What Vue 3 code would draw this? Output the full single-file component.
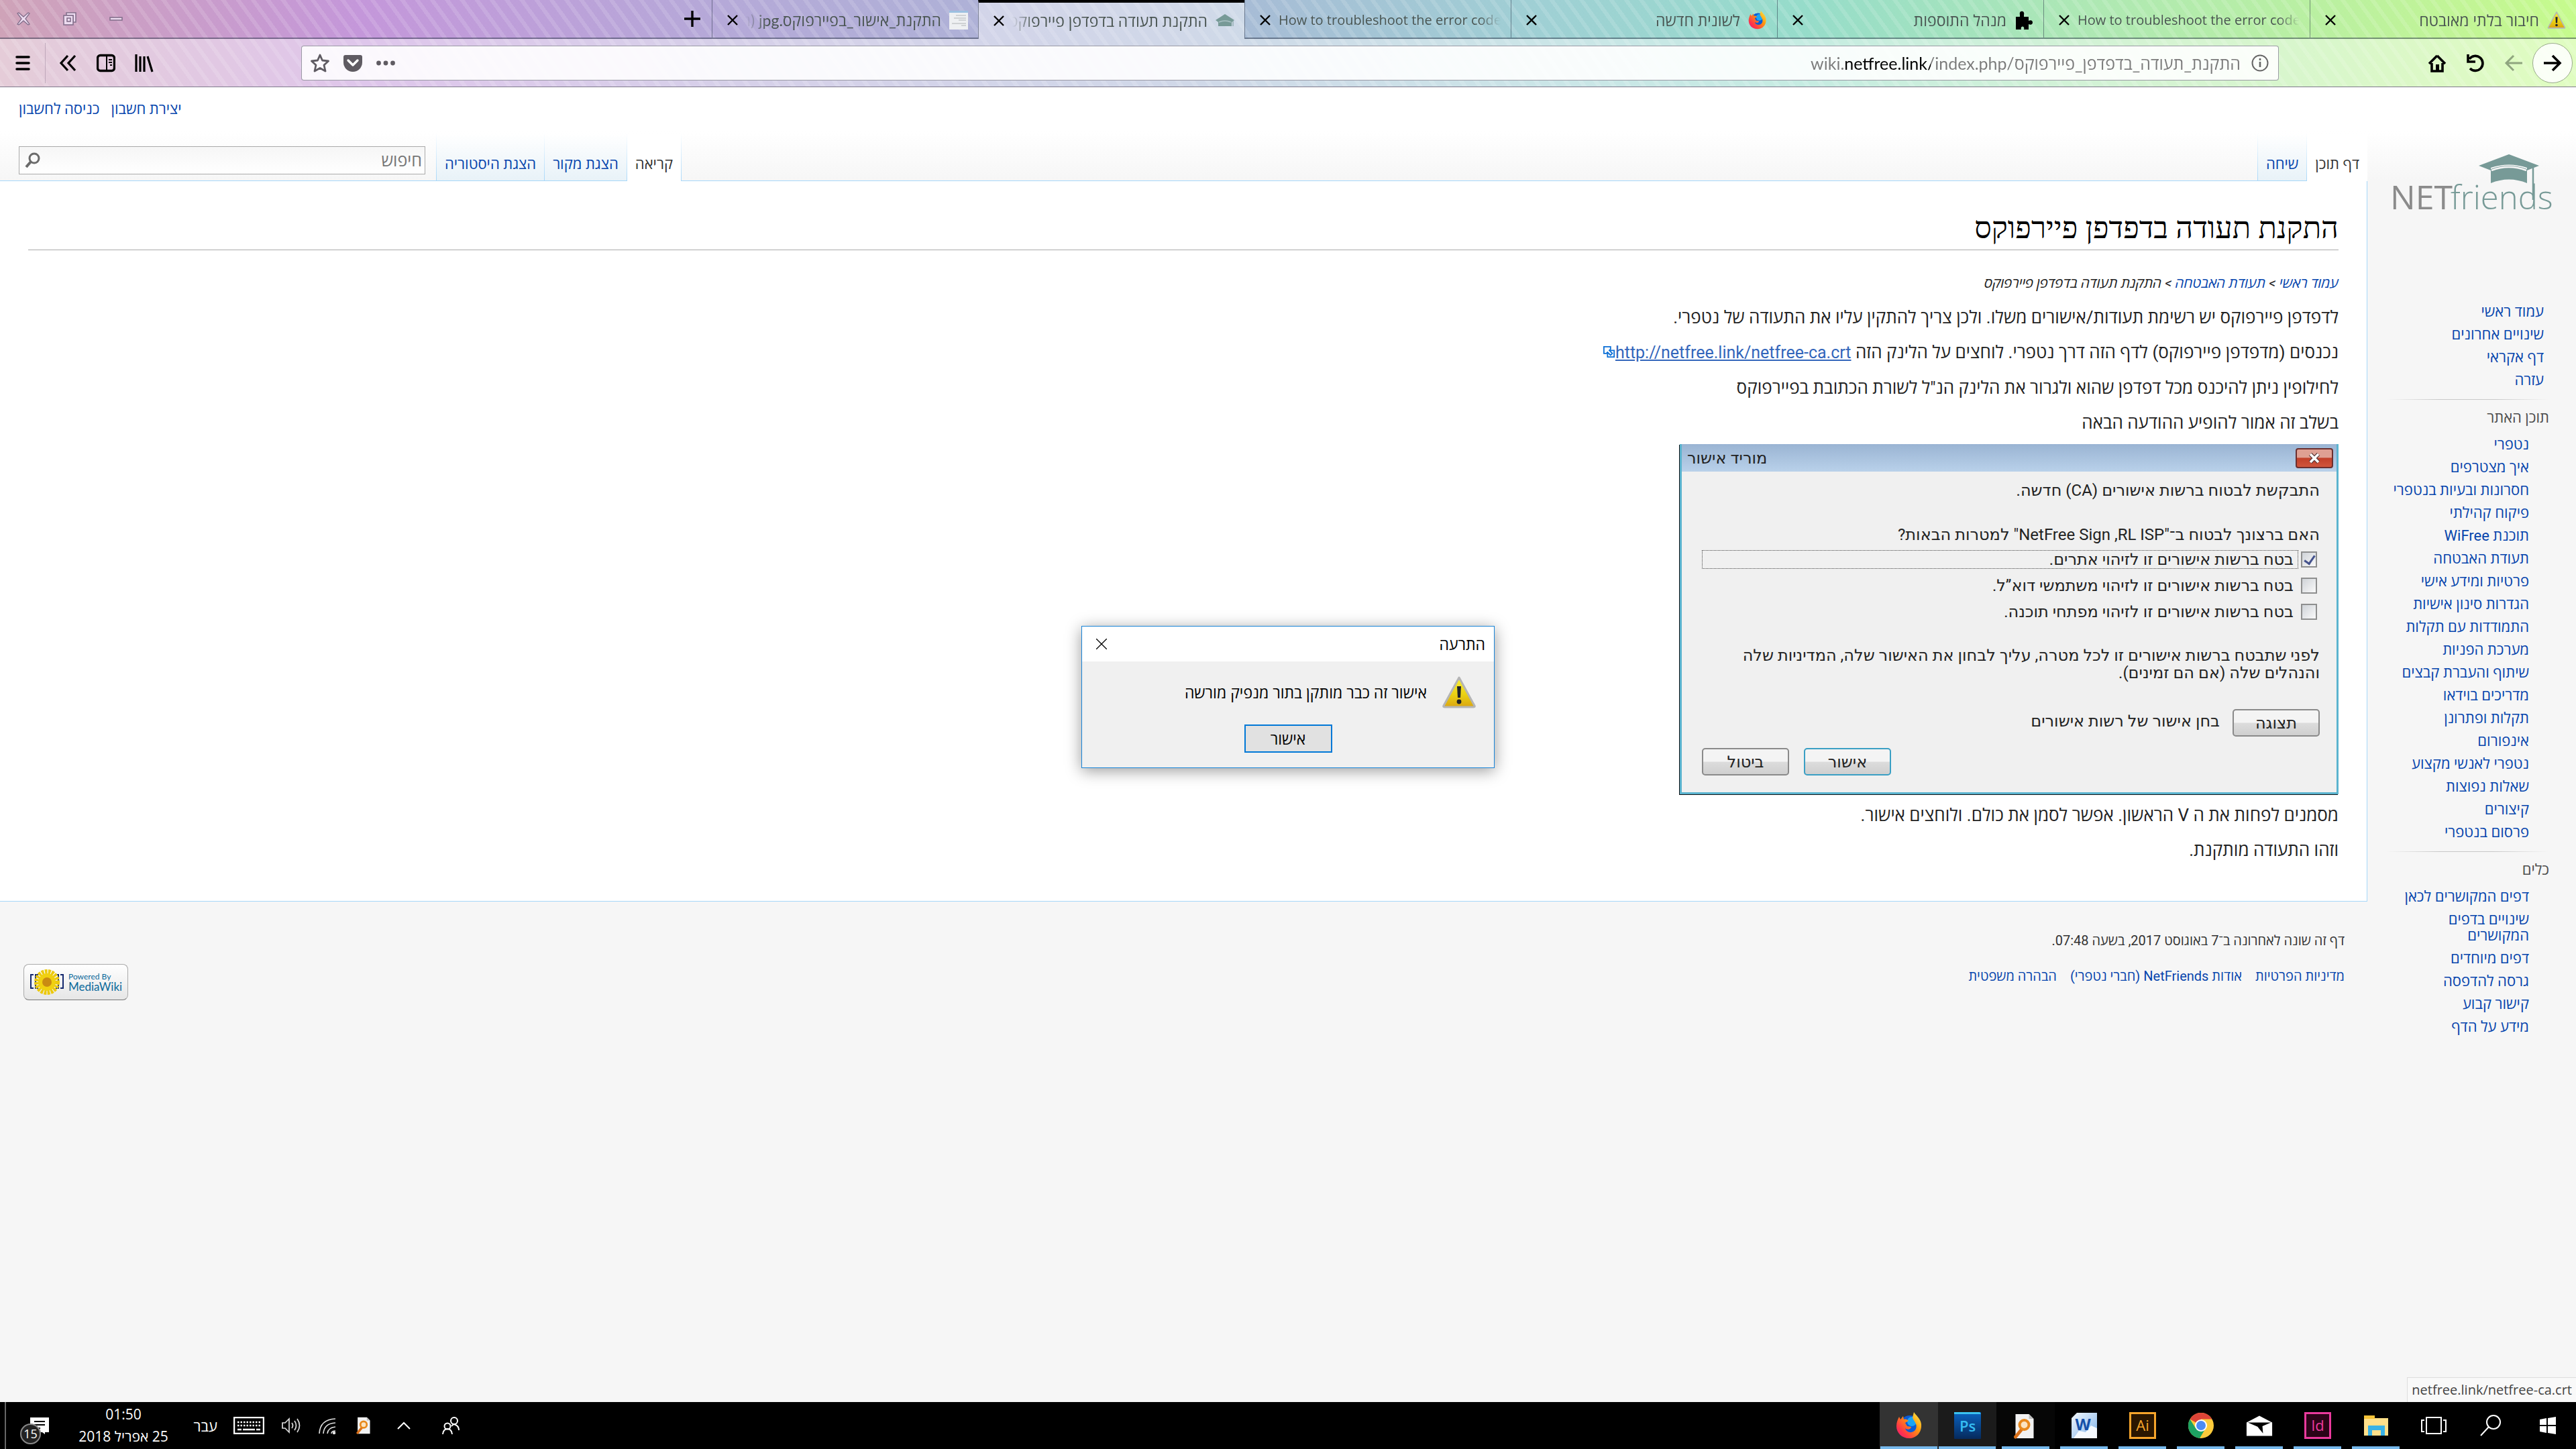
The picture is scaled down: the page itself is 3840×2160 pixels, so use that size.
<script setup>
import { ref } from 'vue';

const tabs = ref([
  { id: 0, title: 'חיבור בלתי מאובטח', icon: 'warn' },
  { id: 1, title: 'How to troubleshoot the error code', ltr: true },
  { id: 2, title: 'מנהל התוספות', icon: 'puzzle' },
  { id: 3, title: 'לשונית חדשה', icon: 'firefox' },
  { id: 4, title: 'How to troubleshoot the error code', ltr: true },
  { id: 5, title: 'התקנת תעודה בדפדפן פיירפוקס', icon: 'capicon' },
  { id: 6, title: 'התקנת_אישור_בפיירפוקס.jpg (ת', icon: 'thumb' }
]);
const activeTab = ref(5);
const url = ref('wiki.netfree.link/index.php/התקנת_תעודה_בדפדפן_פיירפוקס');
const search = ref('');
const showAlert = ref(true);

const mainLinks = ['עמוד ראשי', 'שינויים אחרונים', 'דף אקראי', 'עזרה'];
const siteLinks = [
  'נטפרי',
  'איך מצטרפים',
  'חסרונות ובעיות בנטפרי',
  'פיקוח קהילתי',
  'תוכנת WiFree',
  'תעודת האבטחה',
  'פרטיות ומידע אישי',
  'הגדרות סינון אישיות',
  'התמודדות עם תקלות',
  'מערכת הפניות',
  'שיתוף והעברת קבצים',
  'מדריכים בוידאו',
  'תקלות ופתרונן',
  'אינפורום',
  'נטפרי לאנשי מקצוע',
  'שאלות נפוצות',
  'קיצורים',
  'פרסום בנטפרי'
];
const toolLinks = [
  'דפים המקושרים לכאן',
  'שינויים בדפים המקושרים',
  'דפים מיוחדים',
  'גרסה להדפסה',
  'קישור קבוע',
  'מידע על הדף'
];
const footLinks = ['מדיניות הפרטיות', 'אודות NetFriends (חברי נטפרי)', 'הבהרה משפטית'];

const trust = ref([
  { id: 'web', label: 'בטח ברשות אישורים זו לזיהוי אתרים.', on: true },
  { id: 'mail', label: 'בטח ברשות אישורים זו לזיהוי משתמשי דוא”ל.', on: false },
  { id: 'code', label: 'בטח ברשות אישורים זו לזיהוי מפתחי תוכנה.', on: false }
]);

function closeTab(id) {
  tabs.value = tabs.value.filter((t) => t.id !== id);
}
</script>

<template>
  <div class="screen" dir="rtl">
    <svg class="defs" aria-hidden="true">
      <defs>
        <linearGradient id="gWarn" x1="0" y1="0" x2="0" y2="1">
          <stop offset="0" stop-color="#fbf13a" />
          <stop offset="0.6" stop-color="#e9cf12" />
          <stop offset="1" stop-color="#dba511" />
        </linearGradient>
        <linearGradient id="gFox" x1="1" y1="0" x2="0" y2="1">
          <stop offset="0" stop-color="#fff44f" />
          <stop offset="0.4" stop-color="#ff980e" />
          <stop offset="0.75" stop-color="#ff3647" />
          <stop offset="1" stop-color="#e31587" />
        </linearGradient>
        <linearGradient id="gPs" x1="0" y1="0" x2="0" y2="1">
          <stop offset="0" stop-color="#0a63c0" />
          <stop offset="1" stop-color="#062a5c" />
        </linearGradient>
        <linearGradient id="gWord" x1="0" y1="0" x2="1" y2="1">
          <stop offset="0" stop-color="#f4f9ff" />
          <stop offset="1" stop-color="#7fb2e8" />
        </linearGradient>
        <symbol id="warn" viewBox="0 0 52 48">
          <path d="M26 2 49 44Q50 46 47 46H5Q2 46 3 44Z" fill="url(#gWarn)" stroke="#b5b5b5" stroke-width="3" stroke-linejoin="round" />
          <path d="M23 15h6l-1 17h-4z" fill="#1f2328" />
          <circle cx="26" cy="38" r="3.4" fill="#1f2328" />
        </symbol>
        <symbol id="firefox" viewBox="0 0 40 40">
          <circle cx="21" cy="20" r="15" fill="#0a5bd8" />
          <circle cx="24" cy="14" r="7" fill="#1aa5f5" />
          <path d="M27 0c2 4 10 9 11 18 1 13-8 21-18 21C9 39 1 31 1 21 1 15 3 11 5 7l2 4 4-5 1 5c3-1 5 0 7 2l-5 3 3 5 6 1c-1 5-7 4-9 2 2 8 13 8 16 1 3-8-4-12-5-17Z" fill="url(#gFox)" />
        </symbol>
        <symbol id="cap" viewBox="0 0 90 44">
          <path d="M18 22Q45 12 72 22V43Q45 32 18 43Z" fill="#779a97" />
          <path d="M0 17 18 24V20Q45 11 72 20V24L90 17 45 0Z" fill="#779a97" />
          <path d="M19 24Q45 14 71 24" fill="none" stroke="#f6f6f6" stroke-width="2.5" />
        </symbol>
        <symbol id="capicon" viewBox="0 0 28 28">
          <path d="M14 4 28 13 24 16V22H4V16L0 13Z" fill="#779a97" />
          <path d="M5 16Q14 12 23 16" fill="none" stroke="#a9c1c4" stroke-width="1.5" />
          <path d="M26 14v8" stroke="#779a97" stroke-width="1" />
        </symbol>
        <symbol id="puzzle" viewBox="0 0 28 28">
          <path d="M8 6c-2-7 8-7 6 0v3h7v6c8-4 8 9 0 5v8h-7c2-6-6-6-4 0H2V9h6z" />
        </symbol>
        <symbol id="thumb" viewBox="0 0 28 28">
          <rect width="28" height="28" fill="#eef0f2" />
          <rect width="28" height="3" fill="#9cc0e0" />
          <path d="M10 7h15M7 11h18M14 14h11M4 19h21M18 22h7" stroke="#c5c7ca" stroke-width="1.4" />
        </symbol>
        <symbol id="docsearch" viewBox="0 0 30 38">
          <path d="M2 1h20l7 7v29H2z" fill="#f2f2f2" />
          <path d="M22 1v7h7z" fill="#bdbdbd" />
          <path d="M11 24 2 35" stroke="#d9701a" stroke-width="5" stroke-linecap="round" />
          <circle cx="15" cy="17" r="7" fill="#fbe3c0" stroke="#e8891c" stroke-width="4" />
        </symbol>
      </defs>
    </svg>

    <!-- browser chrome -->
    <header class="chrome">
      <div class="tabbar">
        <div
          v-for="tab in tabs"
          :key="tab.id"
          class="tab"
          :class="{ active: tab.id === activeTab }"
          @click="activeTab = tab.id"
        >
          <svg v-if="tab.icon" class="tabicon"><use :href="'#' + tab.icon" /></svg>
          <span class="tabtitle" :dir="tab.ltr ? 'ltr' : 'rtl'">{{ tab.title }}</span>
          <button class="tabclose" aria-label="סגירה" @click.stop="closeTab(tab.id)">
            <svg viewBox="0 0 16 16"><path d="M1 1 15 15M15 1 1 15" stroke="#000" stroke-width="2.4" /></svg>
          </button>
        </div>
        <button class="newtab" aria-label="לשונית חדשה">
          <svg viewBox="0 0 24 24"><path d="M12 0v24M0 12h24" stroke="#000" stroke-width="3.4" /></svg>
        </button>
        <div class="winctl">
          <button aria-label="מזעור">
            <svg viewBox="0 0 20 20"><rect x="1" y="8" width="18" height="4" fill="#eddcf0" stroke="#84708c" stroke-width="1.6" /></svg>
          </button>
          <button aria-label="שחזור">
            <svg viewBox="0 0 20 20" fill="#eddcf0" stroke="#84708c" stroke-width="1.6"><path d="M5 1h14v14h-4V5H5z" /><rect x="1" y="5" width="14" height="14" /><rect x="6" y="9" width="5" height="5" /></svg>
          </button>
          <button aria-label="סגירה">
            <svg viewBox="0 0 20 20" fill="#eddcf0" stroke="#84708c" stroke-width="1.4"><path d="M1 2 3 1l7 6 7-6 2 1-6 8 6 8-2 1-7-6-7 6-2-1 6-8z" /></svg>
          </button>
        </div>
      </div>

      <div class="navbar">
        <button class="back" aria-label="אחורה">
          <svg viewBox="0 0 28 28" fill="none" stroke="#000" stroke-width="3.6"><path d="M1 14h24M14 3l11 11-11 11" /></svg>
        </button>
        <button class="nav" aria-label="קדימה">
          <svg viewBox="0 0 28 28" fill="none" stroke="#8fa57f" stroke-width="3"><path d="M27 14H3M14 3 3 14l11 11" /></svg>
        </button>
        <button class="nav" aria-label="רענון">
          <svg viewBox="0 0 28 28" fill="none" stroke="#000" stroke-width="3.6"><path d="M5 8a11 11 0 1 1 1 14M3 1v11h11" /></svg>
        </button>
        <button class="nav" aria-label="דף הבית">
          <svg viewBox="0 0 28 28"><path d="M14 3 2 15M14 3l12 12M6 14v12h16V14" fill="none" stroke="#000" stroke-width="3.6" /><rect x="12" y="16" width="5" height="9" /></svg>
        </button>

        <div class="urlbar">
          <svg class="info" viewBox="0 0 26 26" fill="none" stroke="#666"><circle cx="13" cy="13" r="11.5" stroke-width="2" /><path d="M13 11v8M13 6v3" stroke-width="2.6" /></svg>
          <input v-model="url" class="url" dir="ltr" aria-label="כתובת" />
          <button class="urlbtn" aria-label="עוד">
            <svg viewBox="0 0 28 28" fill="#5f5b62"><circle cx="3.5" cy="14" r="3.4" /><circle cx="14" cy="14" r="3.4" /><circle cx="24.5" cy="14" r="3.4" /></svg>
          </button>
          <button class="urlbtn" aria-label="Pocket">
            <svg viewBox="0 0 28 28"><path d="M3 2h22q3 0 3 3v8a14 14 0 0 1-28 0V5q0-3 3-3z" fill="#5f5b62" /><path d="M7 10l7 7 7-7" fill="none" stroke="#fff" stroke-width="3.4" stroke-linecap="round" stroke-linejoin="round" /></svg>
          </button>
          <button class="urlbtn" aria-label="סימנייה">
            <svg viewBox="0 0 28 28"><path d="M14 2l3.5 8 9 1-6.5 6 2 9-8-4.5L6 26l2-9-6.5-6 9-1z" fill="none" stroke="#5f5b62" stroke-width="2.8" stroke-linejoin="round" /></svg>
          </button>
        </div>

        <button class="tool" aria-label="ספרייה">
          <svg viewBox="0 0 28 28" stroke="#000" stroke-width="3.2"><path d="M2 1v26M8 4v23M14 4v23M19 4l7 23" /></svg>
        </button>
        <button class="tool" aria-label="סרגל צד">
          <svg viewBox="0 0 28 28" fill="none" stroke="#000"><rect x="1.5" y="2.5" width="25" height="23" rx="4" stroke-width="3.4" /><path d="M15 3v22" stroke-width="2" /><path d="M18 9h5M18 13h5M20 17h3" stroke-width="2" /></svg>
        </button>
        <button class="tool" aria-label="עוד כלים">
          <svg viewBox="0 0 28 28" fill="none" stroke="#000" stroke-width="3.2"><path d="M14 3 4 14l10 11M25 3 15 14l10 11" /></svg>
        </button>
        <button class="menu" aria-label="תפריט">
          <svg viewBox="0 0 28 28" stroke="#000" stroke-width="3.6" stroke-linecap="round"><path d="M5 5h18M5 14h18M5 23h18" /></svg>
        </button>
      </div>
    </header>

    <!-- wiki page -->
    <div class="wiki">
      <aside class="side">
        <a href="#" class="logo" aria-label="NETfriends">
          <svg viewBox="0 0 244 90">
            <use href="#cap" x="132" y="4" width="90" height="44" />
            <path d="M213 24v48" stroke="#779a97" stroke-width="2.5" />
            <text x="0" y="86" font-size="50" fill="#8b8b8b" direction="ltr">NET</text>
            <text x="90" y="86" font-size="49" font-weight="300" fill="#779a97" direction="ltr">friends</text>
          </svg>
        </a>
        <ul class="links first">
          <li v-for="l in mainLinks" :key="l"><a href="#">{{ l }}</a></li>
        </ul>
        <h3>תוכן האתר</h3>
        <ul class="links">
          <li v-for="l in siteLinks" :key="l"><a href="#">{{ l }}</a></li>
        </ul>
        <h3>כלים</h3>
        <ul class="links">
          <li v-for="l in toolLinks" :key="l"><a href="#">{{ l }}</a></li>
        </ul>
      </aside>

      <div class="column">
        <div class="head">
          <nav class="personal">
            <a href="#">יצירת חשבון</a>
            <a href="#">כניסה לחשבון</a>
          </nav>
          <div class="pagetabs">
            <a href="#" class="ptab on">דף תוכן</a>
            <a href="#" class="ptab">שיחה</a>
            <span class="grow"></span>
            <a href="#" class="ptab on lined">קריאה</a>
            <a href="#" class="ptab">הצגת מקור</a>
            <a href="#" class="ptab">הצגת היסטוריה</a>
            <form class="search" @submit.prevent>
              <input v-model="search" type="text" placeholder="חיפוש" aria-label="חיפוש" />
              <button aria-label="חיפוש">
                <svg viewBox="0 0 24 24" fill="none" stroke="#6b6b6b"><circle cx="14" cy="9" r="7" stroke-width="3" /><path d="M9 14 2 22" stroke-width="4" /></svg>
              </button>
            </form>
          </div>
        </div>

        <main class="article">
          <h1>התקנת תעודה בדפדפן פיירפוקס</h1>
          <p class="crumbs">
            <a href="#">עמוד ראשי</a> &gt; <a href="#">תעודת האבטחה</a> &gt; התקנת תעודה בדפדפן פיירפוקס
          </p>
          <p>לדפדפן פיירפוקס יש רשימת תעודות/אישורים משלו. ולכן צריך להתקין עליו את התעודה של נטפרי.</p>
          <p>
            נכנסים (מדפדפן פיירפוקס) לדף הזה דרך נטפרי. לוחצים על הלינק הזה
            <a href="#" class="ext" dir="ltr">http://netfree.link/netfree-ca.crt</a>
            <svg class="exticon" viewBox="0 0 20 20"><path d="M7 7h11v11H7z" fill="#fff" stroke="#0b6fd6" stroke-width="2" /><path d="M1 1h11v4l-2 2 5 5-3 3-5-5-2 2H1z" fill="#fff" stroke="#0b6fd6" stroke-width="2" /></svg>
          </p>
          <p>לחילופין ניתן להיכנס מכל דפדפן שהוא ולגרור את הלינק הנ"ל לשורת הכתובת בפיירפוקס</p>
          <p>בשלב זה אמור להופיע ההודעה הבאה</p>

          <section class="cert">
            <div class="certbar">
              <button class="certx" aria-label="סגירה">
                <svg viewBox="0 0 20 16"><path d="M4 2 16 14M16 2 4 14" stroke="#5a3a3a" stroke-width="6" /><path d="M4 2 16 14M16 2 4 14" stroke="#fff" stroke-width="3.6" /></svg>
              </button>
              <span>מוריד אישור</span>
            </div>
            <div class="certbody">
              <p class="ask">התבקשת לבטוח ברשות אישורים (CA) חדשה.</p>
              <p class="ask2">האם ברצונך לבטוח ב־"NetFree Sign ,RL ISP" למטרות הבאות?</p>
              <div v-for="t in trust" :key="t.id" class="trust" :class="{ focus: t.id === 'web' }">
                <input :id="t.id" v-model="t.on" type="checkbox" />
                <label :for="t.id">{{ t.label }}</label>
              </div>
              <p class="before">לפני שתבטח ברשות אישורים זו לכל מטרה, עליך לבחון את האישור שלה, המדיניות שלה והנהלים שלה (אם הם זמינים).</p>
              <div class="view">
                <button class="wbtn">תצוגה</button>
                <span>בחן אישור של רשות אישורים</span>
              </div>
              <div class="certbtns">
                <button class="wbtn main">אישור</button>
                <button class="wbtn">ביטול</button>
              </div>
            </div>
          </section>

          <p>מסמנים לפחות את ה V הראשון. אפשר לסמן את כולם. ולוחצים אישור.</p>
          <p>וזהו התעודה מותקנת.</p>
        </main>

        <footer class="foot">
          <div>
            <p>דף זה שונה לאחרונה ב־7 באוגוסט 2017, בשעה 07:48.</p>
            <nav>
              <a v-for="l in footLinks" :key="l" href="#">{{ l }}</a>
            </nav>
          </div>
          <a href="#" class="powered" dir="ltr">
            <svg viewBox="0 0 52 40">
              <path d="M6 9H2v20h4M46 9h4v20h-4M13 9H9v20h4M39 9h4v20h-4" fill="none" stroke="#14286e" stroke-width="2" />
              <circle cx="26" cy="20" r="15" fill="none" stroke="#ecc90c" stroke-width="8" stroke-dasharray="3.6 1.2" />
              <circle cx="26" cy="20" r="13" fill="#f0d010" />
              <circle cx="26" cy="20" r="7" fill="#c98a12" />
            </svg>
            <span><small>Powered By</small><b>MediaWiki</b></span>
          </a>
        </footer>
      </div>

      <div class="status" dir="ltr">netfree.link/netfree-ca.crt</div>
    </div>

    <!-- message box -->
    <div v-if="showAlert" class="alert" role="alertdialog">
      <div class="alerthead">
        <span>התרעה</span>
        <button aria-label="סגירה" @click="showAlert = false">
          <svg viewBox="0 0 16 16"><path d="M0 0 16 16M16 0 0 16" stroke="#000" stroke-width="1.3" /></svg>
        </button>
      </div>
      <div class="alertmsg">
        <svg><use href="#warn" /></svg>
        <span>אישור זה כבר מותקן בתור מנפיק מורשה</span>
      </div>
      <button class="ok" @click="showAlert = false">אישור</button>
    </div>

    <!-- windows taskbar -->
    <div class="taskbar">
      <button class="task" aria-label="התחל">
        <svg viewBox="0 0 40 40" fill="#fff"><path d="M8 11l10-2v10H8zM20 9l12-2v12H20zM8 21h10v10L8 29zM20 21h12v12l-12-2z" /></svg>
      </button>
      <button class="task" aria-label="חיפוש">
        <svg viewBox="0 0 40 40" fill="none" stroke="#fff" stroke-width="2"><circle cx="24" cy="15" r="10" /><path d="M17 22 5 35" /></svg>
      </button>
      <button class="task" aria-label="תצוגת משימות">
        <svg viewBox="0 0 40 40" fill="none" stroke="#fff" stroke-width="2"><rect x="9" y="8" width="22" height="24" /><path d="M6 12H2v17h4M34 12h4v17h-4" /></svg>
      </button>
      <button class="task run" aria-label="סייר הקבצים">
        <svg viewBox="0 0 40 40"><path d="M2 5h16v4h20v26H2z" fill="#ffe08a" /><path d="M2 5h16v5H2z" fill="#f5c338" /><path d="M8 35V20h25v15h-6v-8H14v8z" fill="#39b2e6" /></svg>
      </button>
      <button class="task run" aria-label="InDesign">
        <svg viewBox="0 0 40 40"><rect x="1.5" y="1.5" width="37" height="37" fill="#2b0418" stroke="#ea3a9d" stroke-width="3" /><text x="20" y="28" text-anchor="middle" font-size="22" fill="#ea3a9d">Id</text></svg>
      </button>
      <button class="task run" aria-label="דואר">
        <svg viewBox="0 0 44 40"><path d="M1 15 22 4l21 11v22H1z" fill="#fff" /><path d="M3 15h38L27 21l1 12-9-11z" fill="#000" /></svg>
      </button>
      <button class="task run" aria-label="Chrome">
        <svg viewBox="0 0 40 40"><circle cx="20" cy="20" r="19" fill="#fccb3b" /><path d="M20 20 3.5 10.5A19 19 0 0 1 36.5 10.5H20z" fill="#dc4437" /><path d="M3.5 10.5A19 19 0 0 0 18 39l9-15H12z" fill="#1da362" /><circle cx="20" cy="20" r="9" fill="#fff" /><circle cx="20" cy="20" r="7" fill="#4b8bf4" /></svg>
      </button>
      <button class="task run" aria-label="Illustrator">
        <svg viewBox="0 0 40 40"><rect x="1.5" y="1.5" width="37" height="37" fill="#2a1600" stroke="#f7a52b" stroke-width="3" /><text x="20" y="28" text-anchor="middle" font-size="22" fill="#f7a52b">Ai</text></svg>
      </button>
      <button class="task run" aria-label="Word">
        <svg viewBox="0 0 40 40"><path d="M9 1h30v38H1V9z" fill="url(#gWord)" /><path d="M4 39l8-11 10 2 8-10 9 4v15z" fill="#fff" opacity="0.9" /><text x="18" y="27" text-anchor="middle" font-size="24" font-weight="700" fill="#1550a8">W</text></svg>
      </button>
      <button class="task run faint" aria-label="חיפוש במסמכים">
        <svg viewBox="0 0 40 40"><use href="#docsearch" x="2" y="2" width="31" height="38" /></svg>
      </button>
      <button class="task run wide dim" aria-label="Photoshop">
        <svg viewBox="0 0 40 40"><rect width="40" height="40" rx="1" fill="url(#gPs)" /><path d="M0 0h38l2 3H0z" fill="#3bc3f0" /><text x="20" y="29" text-anchor="middle" font-size="22" font-weight="600" fill="#35bdf2">Ps</text></svg>
      </button>
      <button class="task run wide lit" aria-label="Firefox">
        <svg viewBox="0 0 40 40"><use href="#firefox" /></svg>
      </button>

      <div class="tray">
        <svg class="t28" viewBox="0 0 28 28" fill="none" stroke="#fff" stroke-width="2"><circle cx="19" cy="7" r="5" /><circle cx="9" cy="15" r="4.5" /><path d="M2 27q1-8 7-8t7 8M15 15q3-4 6-2 5 2 5 8" /></svg>
        <svg class="t20" viewBox="0 0 20 20" fill="none" stroke="#fff" stroke-width="2"><path d="M1 15l9-9 9 9" /></svg>
        <svg class="t28" viewBox="0 0 28 28"><use href="#docsearch" x="3" y="1" width="22" height="26" /></svg>
        <svg class="t28" viewBox="0 0 28 28" fill="none" stroke="#ddd" stroke-width="1.7"><path d="M2 26Q3 5 26 4M8 26Q9 11 26 10M14 26q1-9 12-10" /><path d="M20 26q0-4 6-4" /><circle cx="24" cy="25" r="1.5" fill="#fff" /></svg>
        <svg class="t28" viewBox="0 0 28 28" fill="none" stroke="#ddd" stroke-width="1.7"><path d="M1 10h4l6-6v20l-6-6H1zM15 10q3 4 0 8M19 7q5 7 0 14M23 4q7 10 0 20" /></svg>
        <svg class="t46" viewBox="0 0 46 26"><rect x="1" y="1" width="44" height="24" fill="none" stroke="#fff" stroke-width="2.5" /><path d="M6 8h34M6 13h34" stroke="#fff" stroke-width="2.5" stroke-dasharray="2.5 2" /><path d="M6 19h6M14 19h18M34 19h6" stroke="#fff" stroke-width="2.5" /></svg>
        <span class="lang">עבר</span>
        <div class="clock"><span>01:50</span><span>25 אפריל 2018</span></div>
        <div class="notes">
          <svg viewBox="0 0 30 26"><path d="M1 1h28v22h-6v3l-4-3H1z" fill="#fff" /><path d="M7 7h16M7 12h16M7 17h9" stroke="#000" stroke-width="2" /></svg>
          <span>15</span>
        </div>
      </div>
    </div>
  </div>
</template>

<style>
body {
  background: #f6f6f6;
}
</style>

<style scoped>
.screen {
  min-height: 100vh;
  display: flex;
  flex-direction: column;
  position: relative;
  font-family: "Open Sans", "Noto Sans", "Liberation Sans", sans-serif;
  font-size: 23px;
  color: #222;
}
.screen * {
  box-sizing: border-box;
}
.defs {
  position: absolute;
  width: 0;
  height: 0;
}
button {
  padding: 0;
  border: 0;
  background: none;
  font: inherit;
  color: inherit;
  cursor: pointer;
}
svg {
  display: block;
  flex: none;
}
a {
  color: #0645ad;
  text-decoration: none;
}

/* chrome */
.chrome {
  background:
    repeating-linear-gradient(54deg, rgba(255, 255, 255, 0.13) 0 6px, transparent 6px 18px),
    linear-gradient(90deg, #cfa3b8 0, #c497da 14%, #b5a9d8 28%, #a9b8d6 46%, #9fd0d4 60%, #96dcca 70%, #aee8b4 81%, #c2f595 96%, #c6fb8d 100%);
  border-bottom: 1px solid #7f7a8c;
}
.tabbar {
  display: flex;
  height: 58px;
}
.tab {
  flex: 0 1 397px;
  min-width: 0;
  display: flex;
  align-items: center;
  gap: 12px;
  padding: 4px 15px 0 22px;
  border-left: 1px solid rgba(40, 50, 70, 0.5);
  border-bottom: 2px solid rgba(40, 50, 70, 0.5);
  color: #4a5552;
}
.tab.active {
  background: rgba(255, 255, 255, 0.45);
  border-top: 4px solid #000;
  border-bottom: 0;
  padding-top: 0;
}
.tabicon {
  width: 28px;
  height: 28px;
}
.tabtitle {
  flex: 1;
  overflow: hidden;
  white-space: nowrap;
  font-family: Lato, "Open Sans", sans-serif;
  line-height: 34px;
  -webkit-mask-image: linear-gradient(to right, transparent 0, #000 32px);
  mask-image: linear-gradient(to right, transparent 0, #000 32px);
}
.tabtitle[dir='ltr'] {
  font-family: "Open Sans", sans-serif;
  font-size: 20px;
  -webkit-mask-image: linear-gradient(to left, transparent 0, #000 32px);
  mask-image: linear-gradient(to left, transparent 0, #000 32px);
}
.tabclose svg {
  width: 16px;
  height: 16px;
}
.newtab {
  width: 58px;
  display: grid;
  place-items: center;
  border-bottom: 2px solid rgba(40, 50, 70, 0.5);
}
.newtab svg {
  width: 24px;
  height: 24px;
}
.winctl {
  flex: 1;
  display: flex;
  justify-content: flex-end;
  border-bottom: 2px solid rgba(40, 50, 70, 0.5);
}
.winctl button {
  width: 69px;
  display: grid;
  place-items: center;
}
.winctl svg {
  width: 20px;
  height: 20px;
}
.navbar {
  display: flex;
  align-items: center;
  height: 71px;
  padding-right: 5px;
  background: rgba(255, 255, 255, 0.45);
}
.navbar svg {
  width: 28px;
  height: 28px;
}
.back {
  width: 60px;
  height: 60px;
  border: 1px solid #9aab8c;
  border-radius: 50%;
  background: rgba(255, 255, 255, 0.85);
  display: grid;
  place-items: center;
}
.nav,
.tool {
  width: 57px;
  height: 60px;
  display: grid;
  place-items: center;
}
.urlbar {
  flex: 1;
  display: flex;
  align-items: center;
  height: 52px;
  margin: 0 207px 0 206px;
  padding: 0 14px 0 2px;
  border: 1px solid rgba(60, 60, 80, 0.5);
  border-radius: 4px;
  background: rgba(255, 255, 255, 0.88);
}
.urlbar .info {
  width: 26px;
  height: 26px;
  margin-left: 16px;
}
.url {
  flex: 1;
  min-width: 0;
  border: 0;
  outline: 0;
  padding: 0;
  height: 40px;
  text-align: right;
  font-family: Lato, "Open Sans", sans-serif;
  font-size: 25px;
  color: #777;
  /* the host part of the address is drawn darker */
  background: linear-gradient(to left, #7a7a7a 462px, #000 462px 592px, #7a7a7a 592px);
  -webkit-background-clip: text;
  background-clip: text;
  -webkit-text-fill-color: transparent;
}
.urlbtn {
  width: 49px;
  display: grid;
  place-items: center;
}
.menu {
  width: 68px;
  height: 60px;
  margin-right: 4px;
  display: grid;
  place-items: center;
  border-right: 1px solid rgba(80, 60, 90, 0.25);
}

/* wiki */
.wiki {
  flex: 1;
  position: relative;
  display: grid;
  grid-template-columns: 311px 1fr;
  align-items: start;
  background: linear-gradient(#fff 66px, #f6f6f6 140px);
  font-family: Roboto, "Open Sans", "Liberation Sans", sans-serif;
}
.side {
  padding: 96px 40px 40px 28px;
  font-size: 22px;
  line-height: 24px;
}
.logo {
  display: block;
  margin: 0 -7px 0 0;
}
.logo svg {
  width: 244px;
  height: 90px;
  overflow: visible;
  font-family: "Open Sans", sans-serif;
}
.links {
  list-style: none;
  margin: 0;
  padding: 3px 30px 3px 0;
}
.links.first {
  margin-top: 129px;
  padding-right: 8px;
}
.links li {
  padding: 5px 0;
}
.side h3 {
  margin: 8px 0;
  padding-top: 16px;
  font-size: 22px;
  font-weight: 400;
  line-height: 24px;
  color: #4d4d4d;
  background: linear-gradient(to right, transparent, #c8c8c8 33%, #c8c8c8 66%, transparent) 0 0 / 100% 1px no-repeat;
}
.head {
  height: 140px;
  display: flex;
  flex-direction: column;
  justify-content: space-between;
  font-size: 22px;
  line-height: 24px;
  border-bottom: 1px solid #a7d7f9;
}
.personal {
  display: flex;
  justify-content: flex-end;
  gap: 17px;
  padding: 21px 0 0 28px;
}
.pagetabs {
  display: flex;
  height: 70px;
}
.ptab {
  display: flex;
  align-items: flex-end;
  padding: 0 12px 12px;
  border: solid;
  border-image: linear-gradient(#fff, #a7d7f9) 1;
  border-width: 0 0 0 1px;
  background: linear-gradient(#fff, #e8f2f8);
}
.ptab.on {
  background: #fff;
  color: #333;
  margin-bottom: -1px;
  padding-bottom: 13px;
}
.ptab.lined {
  border-width: 0 1px;
}
.grow {
  flex: 1;
}
.search {
  display: flex;
  align-items: center;
  width: 606px;
  height: 42px;
  margin: 19px 16px 0 28px;
  padding: 0 4px 0 8px;
  border: 1px solid #aaa;
  background: linear-gradient(#f6f6f6, #fff);
}
.search input {
  flex: 1;
  min-width: 0;
  border: 0;
  outline: 0;
  padding: 0;
  background: none;
  font: inherit;
  font-size: 25px;
}
.search input::placeholder {
  color: #757575;
}
.search svg {
  width: 24px;
  height: 24px;
}
.article {
  padding: 40px 42px 42px;
  background: #fff;
  border-right: 1px solid #a7d7f9;
  border-bottom: 1px solid #a7d7f9;
  font-size: 26px;
  line-height: 36px;
}
.article > p {
  margin: 16px 0;
}
.article h1 {
  margin: 0 0 32px;
  padding-bottom: 2px;
  border-bottom: 1px solid #aaa;
  font-family: "Liberation Serif", serif;
  font-size: 45px;
  font-weight: 400;
  line-height: 60px;
  color: #000;
}
.article > .crumbs {
  font-size: 21px;
  font-style: italic;
  line-height: 34px;
}
.ext {
  color: #36b;
  font-size: 25px;
  text-decoration: underline;
}
.exticon {
  display: inline-block;
  width: 18px;
  height: 18px;
}

/* certificate dialog */
.cert {
  width: 982px;
  margin: -2px 0 -3px;
  border: 3px solid #5bb4cf;
  border-top: 0;
  background: #f0f0f0;
  box-shadow: -1px 1px 0 #111;
  font-family: Roboto, "DejaVu Sans", sans-serif;
  font-size: 24px;
  color: #222;
}
.certbar {
  display: flex;
  align-items: center;
  justify-content: space-between;
  height: 41px;
  padding: 0 5px 0 8px;
  background: linear-gradient(#9ab4d3, #b9d1ea);
}
.certx {
  width: 56px;
  height: 30px;
  display: grid;
  place-items: center;
  border: 2px solid #6b2f2f;
  border-radius: 4px;
  background: linear-gradient(#dfa093 45%, #c2402a 50%, #d0553c);
}
.certx svg {
  width: 20px;
  height: 16px;
}
.certbody {
  padding: 15px 25px 25px 30px;
  line-height: 26px;
}
.certbody p {
  margin: 0;
}
.certbody .ask2 {
  margin: 40px 0 10px;
}
.trust {
  display: flex;
  align-items: center;
  height: 28px;
  margin: 0 4px 11px 0;
}
.trust input {
  appearance: none;
  position: relative;
  flex: none;
  width: 24px;
  height: 24px;
  margin: 0 0 0 4px;
  border: 2px solid #8e8f8f;
  background: linear-gradient(135deg, #cfd3d8, #fafafa);
}
.trust input:checked::after {
  content: "";
  position: absolute;
  left: 6px;
  top: 1px;
  width: 7px;
  height: 13px;
  border: solid #44528c;
  border-width: 0 3px 3px 0;
  transform: rotate(35deg);
}
.trust label {
  flex: 1;
  padding-right: 6px;
  border: 1px solid transparent;
}
.trust.focus label {
  border: 1px dotted #444;
}
.certbody .before {
  margin-top: 38px;
  padding-left: 40px;
}
.view {
  display: flex;
  gap: 19px;
  margin-top: 41px;
}
.wbtn {
  width: 130px;
  height: 41px;
  border: 2px solid #8a8a8a;
  border-radius: 5px;
  background: linear-gradient(#f4f4f4 48%, #dcdcdc 52%, #cfcfcf);
}
.wbtn.main {
  border-color: #3a9fc4;
}
.view span {
  line-height: 36px;
}
.certbtns {
  display: flex;
  justify-content: flex-end;
  gap: 22px;
  margin-top: 17px;
}

.foot {
  display: flex;
  justify-content: space-between;
  padding: 44px 34px 0 35px;
  font-size: 20px;
  line-height: 28px;
  color: #333;
}
.foot p {
  margin: 0 0 25px;
}
.foot nav {
  display: flex;
  gap: 20px;
}
.powered {
  display: flex;
  align-items: center;
  gap: 6px;
  width: 156px;
  height: 54px;
  margin-top: 49px;
  padding: 0 8px;
  border: 1px solid #aaa;
  border-bottom-color: #777;
  border-radius: 8px;
  background: linear-gradient(#fff, #e6e6e6);
  color: #0b6a9c;
  font-family: Lato, sans-serif;
}
.powered svg {
  width: 52px;
  height: 40px;
}
.powered small {
  display: block;
  font-size: 12px;
  line-height: 13px;
}
.powered b {
  display: block;
  font-size: 17px;
  font-weight: 400;
  line-height: 17px;
}
.status {
  position: absolute;
  right: 0;
  bottom: 0;
  height: 37px;
  padding: 0 6px;
  border: 1px solid #ddd;
  border-width: 1px 0 0 1px;
  background: #f9f9f9;
  font-family: "Open Sans", sans-serif;
  font-size: 20px;
  line-height: 36px;
  color: #444;
}

/* alert */
.alert {
  position: absolute;
  top: 933px;
  left: 0;
  right: 0;
  width: 616px;
  margin: 0 auto;
  padding-bottom: 22px;
  border: 1px solid #1883d7;
  background: #f0f0f0;
  box-shadow: 0 4px 22px rgba(0, 0, 0, 0.4);
  color: #000;
}
.alerthead {
  display: flex;
  align-items: center;
  justify-content: space-between;
  height: 52px;
  padding: 0 13px 0 21px;
  background: #fff;
}
.alerthead svg {
  width: 16px;
  height: 16px;
}
.alertmsg {
  display: flex;
  align-items: center;
  gap: 22px;
  height: 48px;
  margin: 22px 26px 24px;
}
.alertmsg svg {
  width: 52px;
  height: 48px;
}
.ok {
  display: block;
  width: 131px;
  height: 42px;
  margin: 0 auto;
  border: 2px solid #0078d7;
  background: #e1e1e1;
}

/* taskbar */
.taskbar {
  display: flex;
  height: 70px;
  background: #000;
  color: #fff;
}
.task {
  width: 85px;
  height: 70px;
  display: grid;
  place-items: center;
}
.task svg {
  width: 40px;
  height: 40px;
}
.task.run {
  width: 87px;
  background: linear-gradient(#76b9ed, #76b9ed) center bottom / 71px 4px no-repeat;
}
.task.wide {
  background-size: 85px 4px;
}
.task.faint {
  background-color: #060606;
}
.task.dim {
  background-color: #1b1b1b;
}
.task.lit {
  background-color: #333;
}
.tray {
  flex: 1;
  display: flex;
  justify-content: flex-end;
  align-items: center;
  margin-left: 7px;
  border-left: 2px solid #666;
}
.t28 {
  width: 28px;
  height: 28px;
  margin-left: 26px;
}
.t20 {
  width: 20px;
  height: 20px;
  margin: 0 20px 0 36px;
}
.t46 {
  width: 46px;
  height: 26px;
  margin-left: 24px;
}
.lang {
  width: 36px;
  font-size: 22px;
}
.clock {
  display: flex;
  flex-direction: column;
  align-items: center;
  width: 136px;
  margin: 0 36px 0 42px;
  line-height: 33px;
  font-size: 21px;
  white-space: nowrap;
}
.notes {
  position: relative;
  height: 26px;
  padding-left: 35px;
}
.notes svg {
  width: 30px;
  height: 26px;
}
.notes span {
  position: absolute;
  left: 21px;
  top: 10px;
  width: 31px;
  height: 31px;
  border: 2px solid #888;
  border-radius: 50%;
  background: #222;
  font-size: 18px;
  line-height: 27px;
  text-align: center;
}
</style>
